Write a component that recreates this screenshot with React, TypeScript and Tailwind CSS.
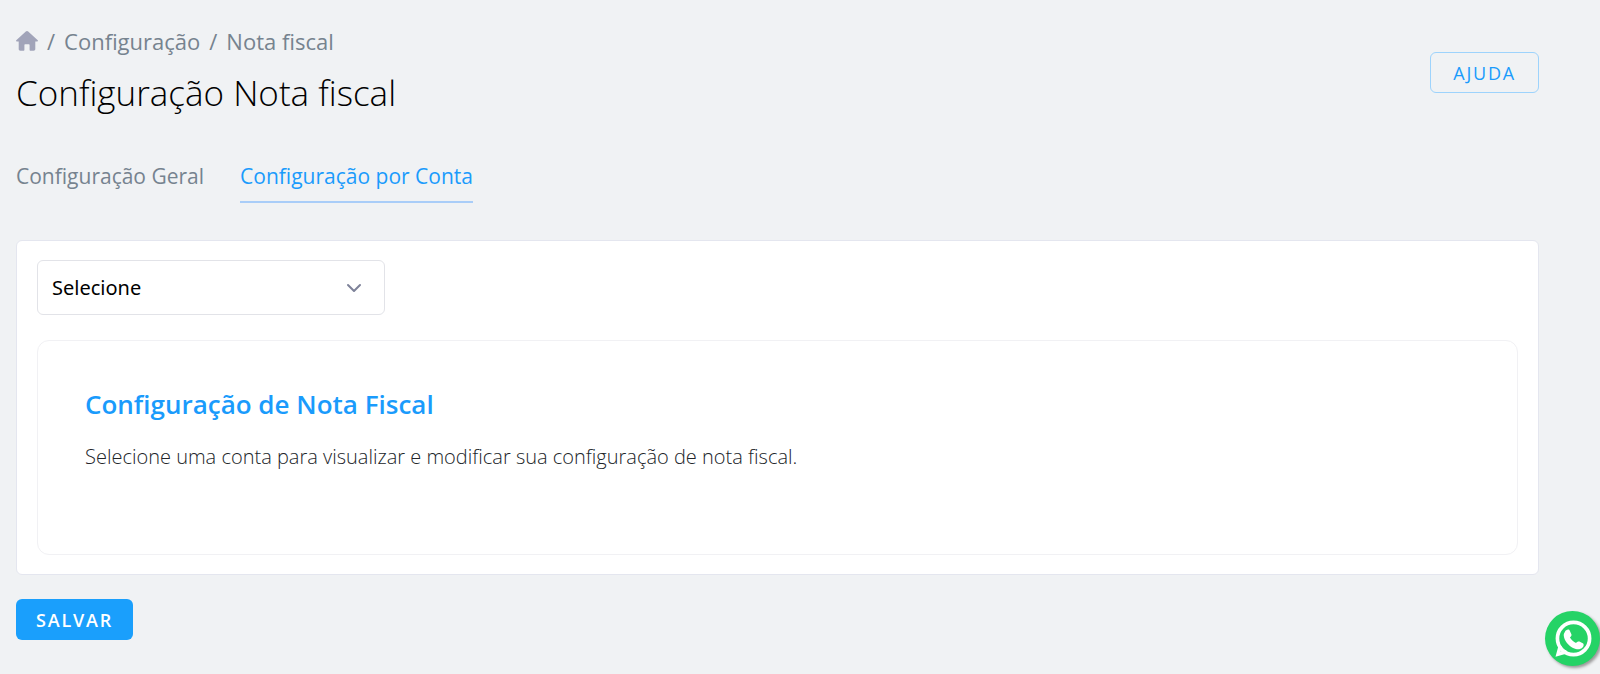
import React, { useState } from 'react';
import { ChevronDown } from 'lucide-react';

const tabs = [
  { id: 'geral', label: 'Configuração Geral' },
  { id: 'conta', label: 'Configuração por Conta' },
];

function HomeIcon() {
  return (
    <svg viewBox="0 0 22 20" className="w-[22px] h-5 fill-[#a1a4b9]" aria-hidden="true">
      <path d="M11 0c.5 0 .9.2 1.200.5l9.300 8.400c.8.7.6 1.600-.4 1.600H19.300v7.500c0 1.100-.6 1.700-1.700 1.700h-3c-.7 0-1-.4-1-1v-4.500c0-.7-.3-1-1-1H9.400c-.7 0-1 .3-1 1v4.500c0 .6-.3 1-1 1h-3c-1.100 0-1.700-.6-1.700-1.700v-7.500H.9c-1 0-1.200-.9-.4-1.600L9.800.5C10.100.2 10.500 0 11 0z" />
    </svg>
  );
}

function WhatsAppIcon() {
  return (
    <svg viewBox="0 0 54 54" className="w-full h-full" fill="#fff" aria-hidden="true">
      <circle cx="28" cy="27" r="15.8" fill="none" stroke="#fff" strokeWidth="3.6" />
      <path d="M10.300 44.800L13.700 32.500L16.500 34.500L15.300 39.800L20.500 38.300L22.500 41.500Z" />
      <path d="M19.500 20.500C20.500 18.500 22.500 17.600 24 18.600L26 23C26.300 24 25.500 25 24.500 26C26 28.500 28 30.300 30.500 31.300C31.500 30.300 32.500 29.600 33.800 30L37.500 31.800C38.500 32.800 37.800 35 36.500 36.200C34.500 38.200 31 38 27.500 36.300C23 34 18.700 28.700 18.400 24C18.300 22.500 18.900 21.400 19.500 20.500Z" />
    </svg>
  );
}

function Breadcrumb() {
  return (
    <nav aria-label="Breadcrumb" className="flex items-center gap-[9px] text-[22px] leading-8 text-[#76838f]">
      <a href="#inicio" aria-label="Início"><HomeIcon /></a>
      <span>/</span>
      <a href="#configuracao">Configuração</a>
      <span>/</span>
      <a href="#nota-fiscal">Nota fiscal</a>
    </nav>
  );
}

export default function App() {
  const [activeTab, setActiveTab] = useState('conta');
  const [account, setAccount] = useState('');

  return (
    <div className="min-h-screen bg-[#f0f2f4] pl-4 pr-[61px] pt-[25px] pb-8 font-['Open_Sans','Noto_Sans',sans-serif] text-black">
      <header className="flex items-start justify-between">
        <div>
          <Breadcrumb />
          <h1 className="mt-3 text-[35px] leading-12 font-light">Configuração Nota fiscal</h1>
        </div>
        <button type="button" className="mt-[27px] h-[41px] px-[22px] rounded-md border border-[#9dd3fc] text-lg leading-6 tracking-widest text-[#1a9bfc]">
          AJUDA
        </button>
      </header>

      <div role="tablist" className="mt-[43px] flex gap-9 text-[21px] leading-8">
        {tabs.map((tab) => (
          <button
            key={tab.id}
            type="button"
            role="tab"
            aria-selected={activeTab === tab.id}
            onClick={() => setActiveTab(tab.id)}
            className={activeTab === tab.id ? 'pb-[9px] border-b-2 border-[#a9cdf8] text-[#1a9bfc]' : 'pb-[9px] border-b-2 border-transparent text-[#76838f]'}
          >
            {tab.label}
          </button>
        ))}
      </div>

      <section className="mt-[37px] px-5 py-[19px] rounded-md border border-[#e4e6ef] bg-white">
        <div className="relative w-[348px]">
          <select
            aria-label="Conta"
            value={account}
            onChange={(e) => setAccount(e.target.value)}
            className="w-full h-[55px] px-[14px] appearance-none rounded-md border border-[#e2e3e8] bg-white font-['Noto_Sans',sans-serif] text-xl"
          >
            <option value="">Selecione</option>
          </select>
          <ChevronDown className="absolute right-[19px] top-4 w-6 h-6 text-[#7e8299] pointer-events-none" />
        </div>

        <div className="mt-[25px] px-[47px] pt-[43px] pb-[81px] rounded-xl border border-[#f1f1f4]">
          <h2 className="text-[26px] leading-10 font-semibold text-[#1a9bfc]">Configuração de Nota Fiscal</h2>
          <p className="mt-[17px] text-xl leading-8 font-light text-[#212529]">
            Selecione uma conta para visualizar e modificar sua configuração de nota fiscal.
          </p>
        </div>
      </section>

      <button type="button" className="mt-6 h-[41px] px-5 rounded-md bg-[#1a9ffc] text-lg leading-6 font-semibold tracking-widest text-white">
        SALVAR
      </button>

      <a
        href="#whatsapp"
        aria-label="WhatsApp"
        className="fixed right-0 bottom-2 w-[55px] h-[55px] rounded-full bg-[#25d366] shadow-[2px_2px_3px_#999]"
      >
        <WhatsAppIcon />
      </a>
    </div>
  );
}
